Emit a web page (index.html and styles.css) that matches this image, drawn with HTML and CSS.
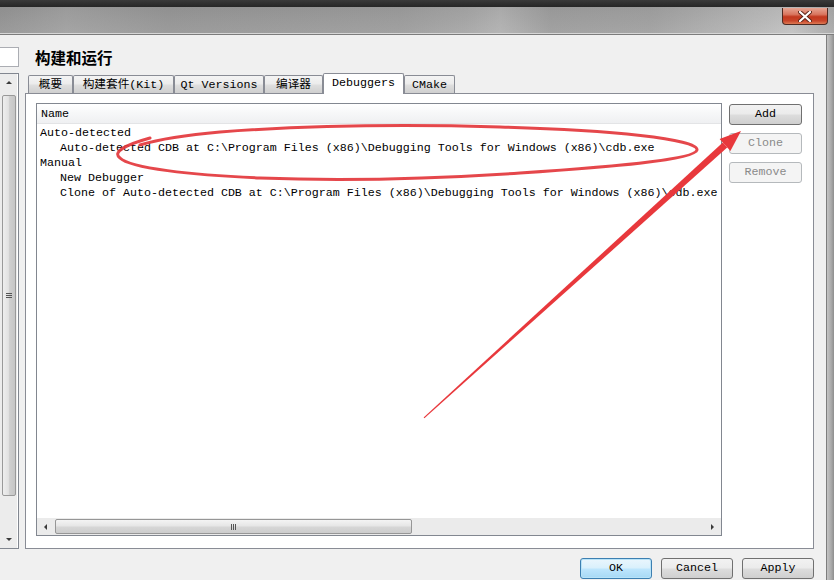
FILE: index.html
```html
<!DOCTYPE html>
<html>
<head>
<meta charset="utf-8">
<link rel="stylesheet" href="styles.css">
</head>
<body>
<div class="screen">
  <div class="topstrip"></div>
  <div class="titlebar">
    <div class="closebtn">
      <svg width="14" height="11" viewBox="0 0 14 11"><path d="M2 1 L12 10 M12 1 L2 10" stroke="#5a2418" stroke-width="4" stroke-linecap="round"/><path d="M2 1 L12 10 M12 1 L2 10" stroke="#ffffff" stroke-width="2.2" stroke-linecap="round"/></svg>
    </div>
  </div>
  <div class="titleline"></div>
  <div class="winbody">
    <div class="client">
      <div class="leftcol">
        <div class="search"></div>
        <div class="leftlist">
          <div class="vscroll">
            <div class="varrow"><span class="tri-up"></span></div>
            <div class="vtrack">
              <div class="vthumb"><span class="vgrip"><i></i><i></i><i></i></span></div>
            </div>
            <div class="varrow"><span class="tri-down"></span></div>
          </div>
        </div>
      </div>
      <div class="maincol">
        <div class="pagetitle">构建和运行</div>
        <div class="tabs">
          <div class="tab w1">概要</div>
          <div class="tab w2">构建套件(Kit)</div>
          <div class="tab w3">Qt Versions</div>
          <div class="tab w4">编译器</div>
          <div class="tab active w5">Debuggers</div>
          <div class="tab w6">CMake</div>
        </div>
        <div class="pane">
          <div class="tree">
            <div class="thead">Name</div>
            <div class="rows">
              <div class="row">Auto-detected</div>
              <div class="row child">Auto-detected CDB at C:\Program Files (x86)\Debugging Tools for Windows (x86)\cdb.exe</div>
              <div class="row">Manual</div>
              <div class="row child">New Debugger</div>
              <div class="row child">Clone of Auto-detected CDB at C:\Program Files (x86)\Debugging Tools for Windows (x86)\cdb.exe</div>
            </div>
            <div class="hscroll">
              <div class="harrow"><span class="tri-left"></span></div>
              <div class="hthumb"><span class="hgrip"><i></i><i></i><i></i></span></div>
              <div class="htrack"></div>
              <div class="harrow"><span class="tri-right"></span></div>
            </div>
          </div>
          <div class="sidebtns">
            <div class="btn">Add</div>
            <div class="btn disabled">Clone</div>
            <div class="btn disabled">Remove</div>
          </div>
        </div>
        <div class="dlgbtns">
          <div class="btn dlg focus">OK</div>
          <div class="btn dlg">Cancel</div>
          <div class="btn dlg">Apply</div>
        </div>
      </div>
    </div>
    <div class="frame-r"></div>
  </div>
  <svg class="annot" width="834" height="580" viewBox="0 0 834 580">
    <path d="M150 138 C 125 145, 112 152, 120 158 C 130 168, 190 175, 260 178 C 340 181, 430 179, 520 173 C 610 167, 695 160, 697 150 C 699 139, 610 130, 500 127 C 400 124, 300 126, 220 132 C 185 135, 160 139, 140 145" fill="none" stroke="#e3373c" stroke-width="3" stroke-linecap="round" opacity="0.92"/>
    <polygon points="423.6,417.4 424.4,418.2 727.2,147.6 722.8,142.4" fill="#e8383c"/>
    <polygon points="741,131 719.6,139.1 730.4,150.9" fill="#e8383c"/>
  </svg>
</div>
</body>
</html>
```
FILE: styles.css
```css
* { box-sizing: border-box; }
html, body { margin: 0; padding: 0; }
body {
  width: 834px;
  height: 580px;
  overflow: hidden;
  background: #f0f0f0;
  font-family: "Liberation Mono", "Noto Sans CJK SC", monospace;
  font-size: 11.67px;
  color: #000;
}
.screen {
  position: relative;
  width: 834px;
  height: 580px;
  display: flex;
  flex-direction: column;
}
.topstrip {
  height: 7px;
  background: linear-gradient(#3a3a3a, #262626);
  flex: none;
}
.titlebar {
  height: 26px;
  flex: none;
  display: flex;
  justify-content: flex-end;
  align-items: flex-start;
  padding-right: 6px;
  padding-top: 1px;
  background:
    linear-gradient(rgba(0,0,0,0.05), rgba(255,255,255,0.04)),
    linear-gradient(90deg, #969696 0%, #a2a2a2 8%, #989898 20%, #9b9b9b 35%, #9e9e9e 48%, #a8a8a8 56%, #b2b2b2 60%, #9f9f9f 66%, #a2a2a2 78%, #b4b4b4 88%, #c2c2c2 95%, #aaaaaa 100%);
}
.closebtn {
  width: 46px;
  height: 17px;
  border: 1px solid #4e2a22;
  border-top: none;
  border-radius: 0 0 4px 4px;
  background: linear-gradient(#e6a593 0%, #d9765f 40%, #c2391f 55%, #c8452a 80%, #dd7a54 100%);
  display: flex;
  align-items: center;
  justify-content: center;
}
.titleline {
  height: 2px;
  flex: none;
  background: linear-gradient(#d6d6d6 50%, #7c7c7c 50%);
}
.winbody {
  flex: 1;
  display: flex;
  min-height: 0;
}
.client {
  width: 827px;
  display: flex;
  border-right: 1px solid #7d7d7d;
  background: #f0f0f0;
}
.frame-r {
  flex: 1;
  background: linear-gradient(90deg, #c4c4c4, #a9a9a9 60%, #8e8e8e);
}
.leftcol {
  width: 19px;
  margin-right: 6px;
  display: flex;
  flex-direction: column;
  flex: none;
}
.search {
  margin-top: 12px;
  height: 20px;
  background: #fff;
  border: 1px solid #abadb3;
  border-left: none;
}
.leftlist {
  margin-top: 6px;
  height: 476px;
  background: #fff;
  border: 1px solid #828790;
  border-left: none;
  padding: 0 1px 0 0;
}
.vscroll {
  height: 100%;
  display: flex;
  flex-direction: column;
  background: #ececec;
}
.varrow {
  height: 17px;
  display: flex;
  align-items: center;
  justify-content: center;
  flex: none;
}
.tri-up { width: 0; height: 0; border-left: 3px solid transparent; border-right: 3px solid transparent; border-bottom: 3px solid #3a3a3a; }
.tri-down { width: 0; height: 0; border-left: 3px solid transparent; border-right: 3px solid transparent; border-top: 3px solid #3a3a3a; }
.tri-left { width: 0; height: 0; border-top: 3px solid transparent; border-bottom: 3px solid transparent; border-right: 3px solid #3a3a3a; }
.tri-right { width: 0; height: 0; border-top: 3px solid transparent; border-bottom: 3px solid transparent; border-left: 3px solid #3a3a3a; }
.vtrack {
  flex: 1;
  padding: 4px 1px 35px 2px;
  display: flex;
}
.vthumb {
  flex: 1;
  border: 1px solid #999;
  border-radius: 2px;
  background: linear-gradient(90deg, #eeeeee, #e2e2e2 45%, #cfcfcf 55%, #c6c6c6);
  display: flex;
  align-items: center;
  justify-content: center;
}
.vgrip { display: flex; flex-direction: column; gap: 1px; }
.vgrip i { display: block; width: 6px; height: 1px; background: #555; }
.maincol {
  width: 789px;
  display: flex;
  flex-direction: column;
  flex: none;
}
.pagetitle {
  margin-top: 12px;
  height: 20px;
  line-height: 20px;
  padding-left: 10px;
  font-family: "Noto Sans CJK SC", sans-serif;
  font-weight: bold;
  font-size: 15.5px;
}
.tabs {
  margin-top: 6px;
  height: 20px;
  display: flex;
  align-items: flex-end;
  padding-left: 3px;
  position: relative;
  z-index: 1;
}
.tab {
  height: 18px;
  border: 1px solid #898c95;
  border-bottom: none;
  border-radius: 2px 2px 0 0;
  background: linear-gradient(#f4f4f4 0%, #ececec 45%, #dedede 55%, #cfcfcf 100%);
  display: flex;
  align-items: center;
  justify-content: center;
  line-height: 1;
  white-space: nowrap;
  padding-top: 2px;
}
.tab.active {
  height: 21px;
  margin-bottom: -1px;
  background: #ffffff;
  padding-top: 1px;
  padding-bottom: 2px;
}
.w1 { width: 45px; }
.w2 { width: 101px; }
.w3 { width: 90px; }
.w4 { width: 59px; }
.w5 { width: 81px; }
.w6 { width: 51px; }
.pane {
  height: 456px;
  border: 1px solid #898c95;
  background: #fff;
  display: flex;
  padding: 9px 10px 12px 10px;
  gap: 7px;
}
.tree {
  width: 686px;
  height: 433px;
  border: 1px solid #828790;
  display: flex;
  flex-direction: column;
  overflow: hidden;
}
.thead {
  height: 20px;
  line-height: 19px;
  padding-top: 1px;
  padding-left: 4px;
  background: linear-gradient(#ffffff, #f6f7f8 50%, #eff0f2);
  border-bottom: 1px solid #e3e4e6;
  flex: none;
}
.rows {
  flex: 1;
  padding-top: 2px;
}
.row {
  height: 15px;
  line-height: 15px;
  padding-left: 3px;
  white-space: nowrap;
}
.row.child { padding-left: 23px; }
.hscroll {
  height: 17px;
  flex: none;
  display: flex;
  background: #ebebeb;
  padding: 1px 0;
}
.harrow {
  width: 17px;
  display: flex;
  align-items: center;
  justify-content: center;
  flex: none;
}
.hthumb {
  width: 357px;
  border: 1px solid #969696;
  border-radius: 2px;
  background: linear-gradient(#f4f4f4, #e6e6e6 45%, #d6d6d6 55%, #cdcdcd);
  display: flex;
  align-items: center;
  justify-content: center;
  margin-left: 1px;
}
.hgrip { display: flex; gap: 1px; }
.hgrip i { display: block; width: 1px; height: 6px; background: #555; }
.htrack { flex: 1; }
.sidebtns {
  display: flex;
  flex-direction: column;
  gap: 8px;
  padding-top: 1px;
}
.btn {
  width: 73px;
  height: 21px;
  border: 1px solid #707070;
  border-radius: 3px;
  background: linear-gradient(#f2f2f2 0%, #ebebeb 48%, #dddddd 52%, #cfcfcf 100%);
  display: flex;
  align-items: center;
  justify-content: center;
  line-height: 1;
  padding-top: 1px;
  color: #000;
}
.btn.disabled {
  border-color: #b5b9bc;
  background: #f4f4f4;
  color: #8a8a8a;
}
.dlgbtns {
  margin-top: 9px;
  display: flex;
  justify-content: flex-end;
  gap: 9px;
}
.btn.dlg { width: 72px; }
.btn.focus {
  border-color: #3c7fb1;
  background: linear-gradient(#eaf6fd 0%, #d9f0fc 48%, #bee6fd 52%, #a7d9f5 100%);
  box-shadow: inset 0 0 0 1px #b8e3f8;
}
.annot {
  position: absolute;
  left: 0;
  top: 0;
  pointer-events: none;
}
```
